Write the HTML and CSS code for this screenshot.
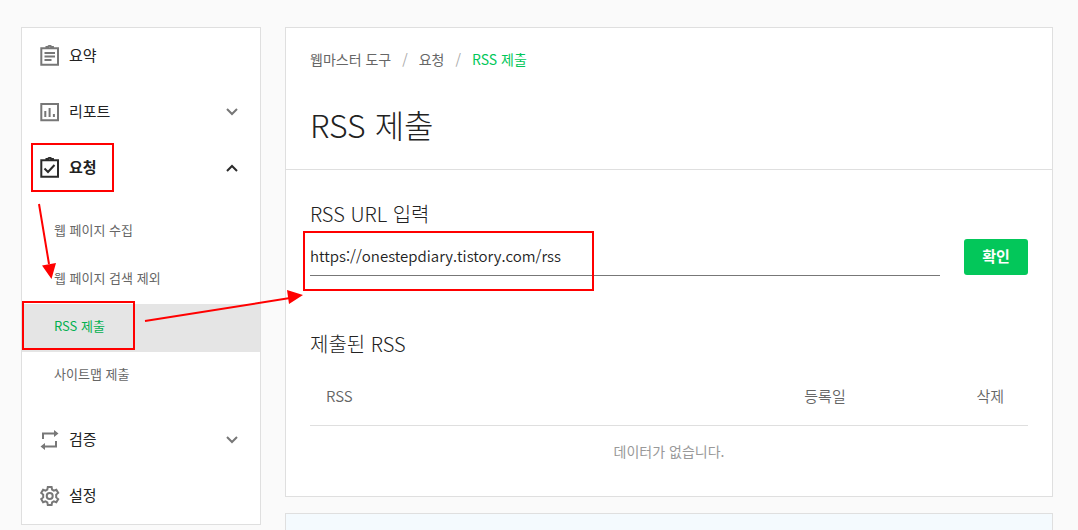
FILE: index.html
```html
<!DOCTYPE html>
<html lang="ko">

<head>
    <meta charset="UTF-8">
    <meta name="viewport" content="width=device-width, initial-scale=1.0">
    <title>RSS 제출 - 웹마스터 도구</title>
    <link rel="stylesheet" href="styles.css">
</head>

<body>
    <div class="page">
        <nav class="sidebar">
            <a class="menu-item" href="#">
                <svg class="icon" viewBox="0 0 20 22">
                    <path d="M1.300 3.200h16.700v16.500H1.300z M6.500 3.200V2h1.600a1.700 1.700 0 0 1 3.200 0h1.600v1.200" />
                    <path d="M4.500 8h10.500M4.500 11.500h10.500M4.500 15h7" />
                </svg>
                <span>요약</span>
            </a>
            <a class="menu-item" href="#">
                <svg class="icon" viewBox="0 0 20 22">
                    <path d="M1.300 3h16.700v16.200H1.300z M5.300 10v6M9.600 7v9M13.900 13v3" />
                </svg>
                <span>리포트</span>
                <svg class="chevron" viewBox="0 0 12 8"><path d="M1 1l5 5 5-5" /></svg>
            </a>
            <a class="menu-item open" href="#">
                <svg class="icon" viewBox="0 0 20 22">
                    <path d="M1.300 3.200h16.700v16.500H1.300z M6.500 3.200V2h1.600a1.700 1.700 0 0 1 3.200 0h1.600v1.200" />
                    <path d="M4.500 11.500l3.500 3.500 6.500-7" />
                </svg>
                <span>요청</span>
                <svg class="chevron" viewBox="0 0 12 8"><path d="M1 7l5-5 5 5" /></svg>
            </a>
            <div class="submenu">
                <a href="#">웹 페이지 수집</a>
                <a href="#">웹 페이지 검색 제외</a>
                <a class="active" href="#">RSS 제출</a>
                <a href="#">사이트맵 제출</a>
            </div>
            <a class="menu-item" href="#">
                <svg class="icon" viewBox="0 0 20 22">
                    <path d="M3 10V4.500h12M16 12v5.500H4" />
                    <path class="fill" d="M14 1l4.500 3.500-4.500 3.500zM5 14l-4.500 3.500L5 21z" />
                </svg>
                <span>검증</span>
                <svg class="chevron" viewBox="0 0 12 8"><path d="M1 1l5 5 5-5" /></svg>
            </a>
            <a class="menu-item" href="#">
                <svg class="icon" viewBox="0 0 20 22">
                    <path d="M7.800 2h3.800l.5 2.600 1.700 1 2.500-.9 1.900 3.200-2 1.700v2.800l2 1.700-1.900 3.200-2.500-.9-1.700 1-.5 2.600H7.800l-.5-2.600-1.700-1-2.500.9-1.900-3.200 2-1.700V9.600l-2-1.700 1.900-3.200 2.500.9 1.700-1z" />
                    <circle cx="9.700" cy="11" r="3" />
                </svg>
                <span>설정</span>
            </a>
        </nav>

        <main class="content">
            <section class="card">
                <header class="card-header">
                    <div class="breadcrumb">
                        <a href="#">웹마스터 도구</a>
                        <span>/</span>
                        <a href="#">요청</a>
                        <span>/</span>
                        <a class="current" href="#">RSS 제출</a>
                    </div>
                    <h1>RSS 제출</h1>
                </header>
                <div class="card-body">
                    <h2><label for="rss-url">RSS URL 입력</label></h2>
                    <form class="rss-form">
                        <input id="rss-url" type="text" value="https://onestepdiary.tistory.com/rss">
                        <button type="button">확인</button>
                    </form>
                    <h2>제출된 RSS</h2>
                    <table>
                        <thead>
                            <tr>
                                <th class="col-rss">RSS</th>
                                <th class="col-date">등록일</th>
                                <th class="col-delete">삭제</th>
                            </tr>
                        </thead>
                        <tbody>
                            <tr>
                                <td colspan="3">데이터가 없습니다.</td>
                            </tr>
                        </tbody>
                    </table>
                </div>
            </section>
            <section class="notice"></section>
        </main>

        <!-- 설명용 빨간 표시 -->
        <svg class="marks" width="620" height="360">
            <rect x="32" y="144" width="81" height="47" />
            <rect x="23" y="302" width="111" height="47" />
            <rect x="304" y="232" width="289" height="58" />
            <path d="M39 204L49 264M145 321L290 298" />
            <path class="head" d="M42 265.500L56 263L51.500 279zM287 290L303 295L289 304z" />
        </svg>
    </div>
</body>

</html>
```

FILE: styles.css
```css
* {
    box-sizing: border-box;
}

body {
    margin: 0;
    background-color: #fafafa;
    color: #222;
    font-family: "Noto Sans CJK KR", sans-serif;
    font-size: 15px;
}

a {
    color: inherit;
    text-decoration: none;
}

.page {
    position: relative;
    display: flex;
    gap: 24px;
    min-height: 100vh;
    padding: 27px 25px 0 21px;
}

.sidebar {
    flex: 0 0 240px;
    align-self: flex-start;
    background-color: #fff;
    border: 1px solid #dfdfdf;
}

.menu-item {
    display: flex;
    align-items: center;
    gap: 9px;
    height: 56px;
    padding: 0 22px 0 18px;
}

.menu-item span {
    padding-bottom: 4px;
}

.menu-item.open {
    font-weight: 700;
}

.icon {
    width: 20px;
    height: 22px;
    fill: none;
    stroke: #777;
    stroke-width: 2;
}

.icon .fill {
    fill: #777;
    stroke: none;
}

.open .icon,
.open .chevron {
    stroke: #2b2b2b;
}

.chevron {
    width: 12px;
    height: 8px;
    margin-left: auto;
    fill: none;
    stroke: #777;
    stroke-width: 2;
}

.submenu {
    padding: 12px 0;
    color: #666;
    font-size: 13px;
}

.submenu a {
    display: block;
    padding: 0 0 4px 32px;
    line-height: 44px;
}

.submenu .active {
    background-color: #e5e5e5;
    color: #03b050;
}

.content {
    display: flex;
    flex: 1;
    flex-direction: column;
}

.card {
    background-color: #fff;
    border: 1px solid #dfdfdf;
}

.card-header {
    padding: 19px 24px 20px;
    border-bottom: 1px solid #dfdfdf;
}

.breadcrumb {
    display: flex;
    gap: 11px;
    color: #666;
    font-size: 14px;
    line-height: 24px;
}

.breadcrumb span {
    color: #aaa;
}

.breadcrumb .current {
    color: #03c75a;
}

h1 {
    margin: 28px 0 0;
    font-size: 32px;
    font-weight: 300;
    line-height: 50px;
}

.card-body {
    padding: 28px 24px 16px;
}

h2 {
    margin: 0;
    font-size: 20px;
    font-weight: 300;
    line-height: 32px;
}

.rss-form {
    display: flex;
    align-items: flex-start;
    gap: 24px;
    margin: 9px 0 52px;
}

.rss-form input {
    flex: 1;
    height: 37px;
    padding: 0 0 4px;
    border: 0;
    border-bottom: 1px solid #777;
    outline: none;
    color: #222;
    background-color: transparent;
    font-family: inherit;
    font-size: 15px;
    font-weight: 350;
}

.rss-form button {
    width: 64px;
    height: 36px;
    padding: 0 0 3px;
    border: 0;
    border-radius: 3px;
    background-color: #03c75a;
    color: #fff;
    font-family: inherit;
    font-size: 15px;
    font-weight: 700;
    cursor: pointer;
}

table {
    width: 100%;
    margin-top: 8px;
    border-collapse: collapse;
    text-align: center;
    table-layout: fixed;
}

th {
    height: 57px;
    padding: 0 16px 2px;
    border-bottom: 1px solid #dfdfdf;
    color: #666;
    font-weight: 350;
}

.col-rss {
    text-align: left;
}

.col-date {
    width: 166px;
}

.col-delete {
    width: 120px;
    padding-right: 24px;
    text-align: right;
}

td {
    height: 55px;
    padding: 0 0 4px;
    color: #999;
    font-size: 14px;
}

.notice {
    flex: 1;
    margin-top: 16px;
    border: 1px solid #dfdfdf;
    border-bottom: 0;
    background-color: #f4fafe;
}

.marks {
    position: absolute;
    top: 0;
    left: 0;
    fill: none;
    stroke: #f00;
    stroke-width: 2;
    pointer-events: none;
}

.marks .head {
    fill: #f00;
    stroke: none;
}
```
